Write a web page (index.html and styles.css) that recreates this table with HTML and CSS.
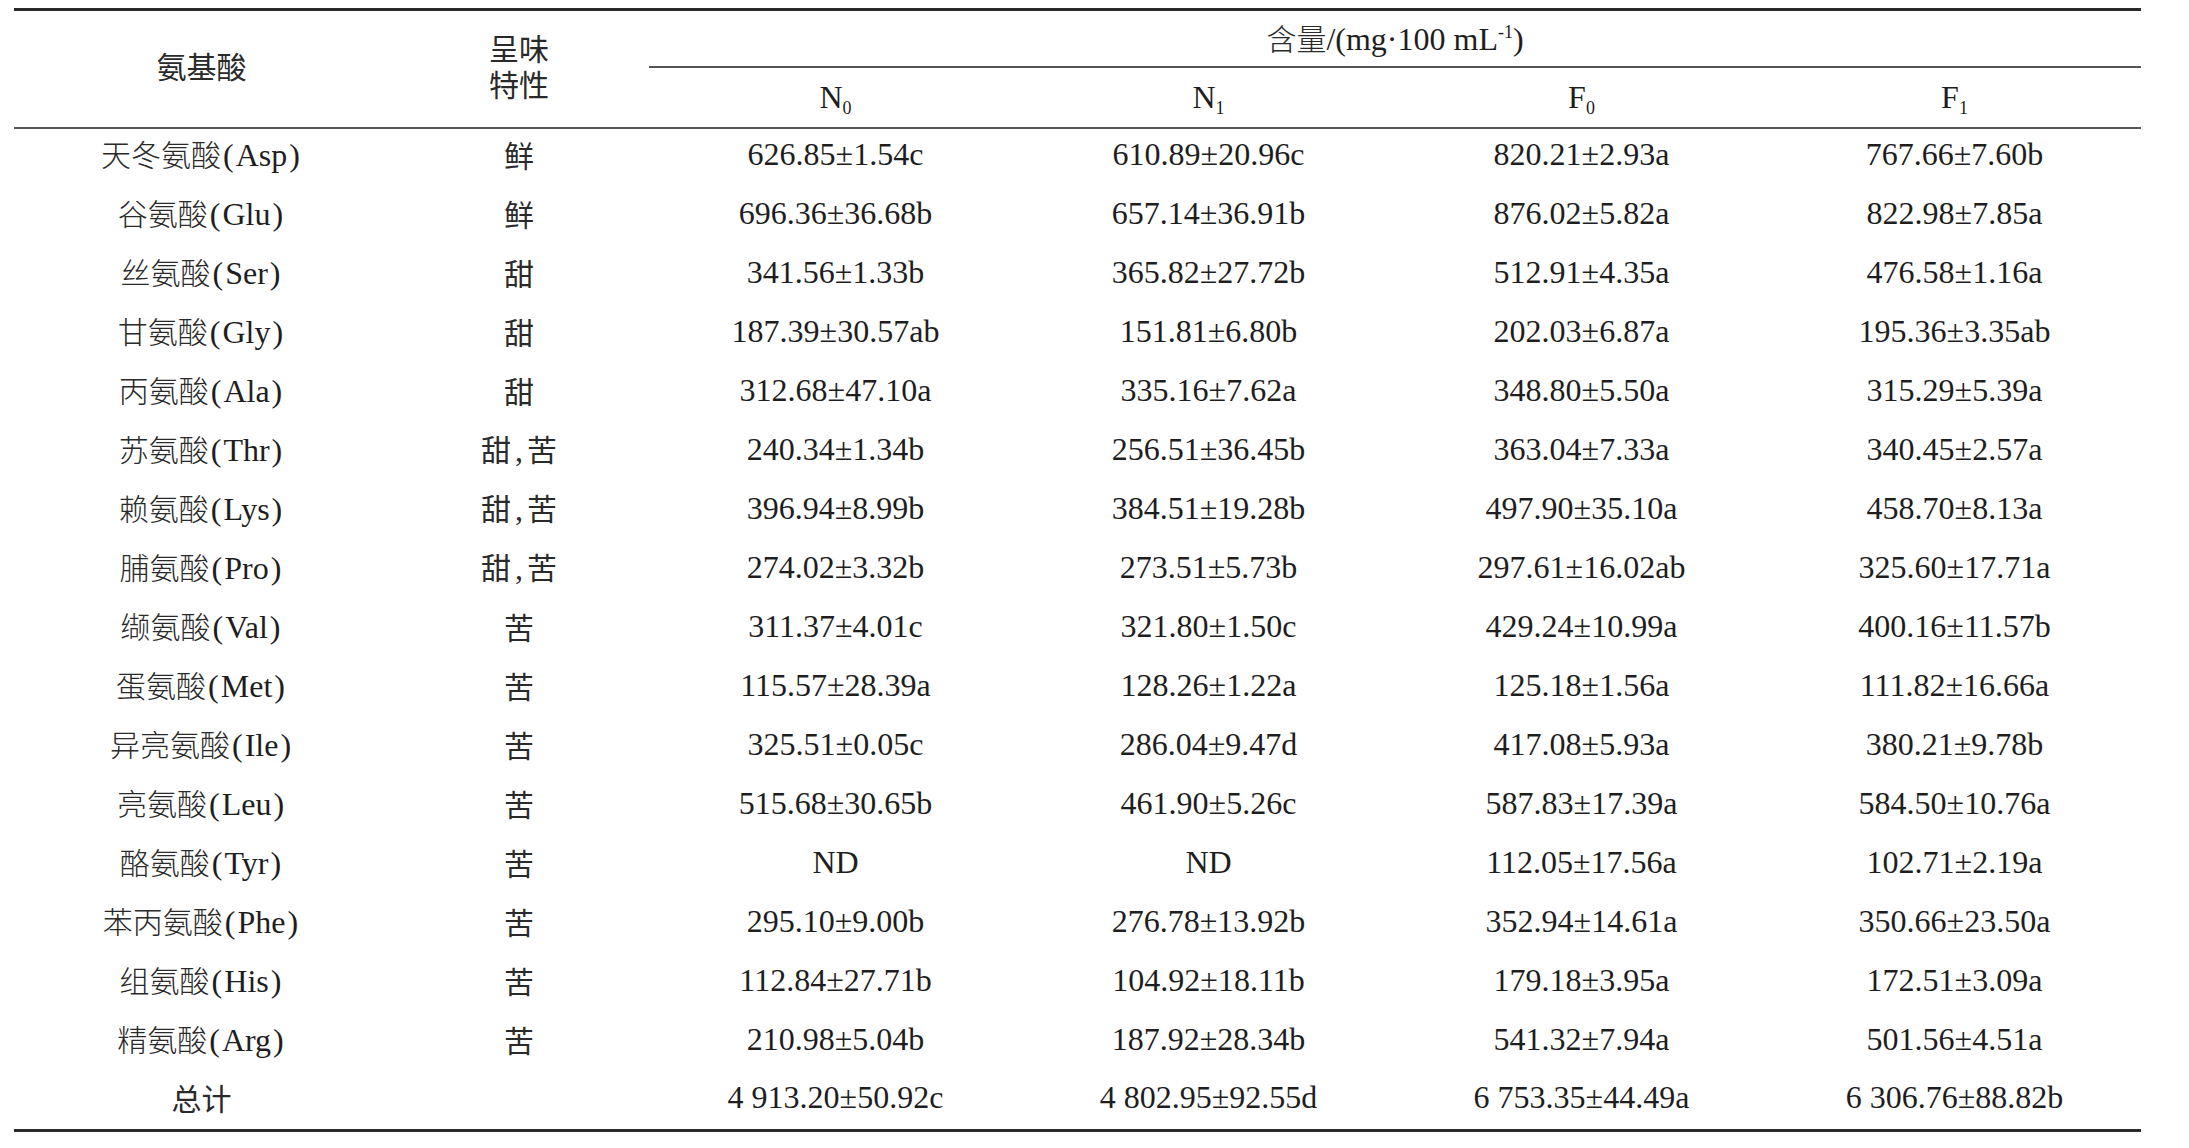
FILE: index.html
```html
<!DOCTYPE html>
<html lang="zh">
<head>
<meta charset="utf-8">
<title>氨基酸含量</title>
<link rel="stylesheet" href="styles.css">
</head>
<body>
<table class="aa-table">
  <colgroup>
    <col class="c-name"><col class="c-taste"><col class="c-val"><col class="c-val"><col class="c-val"><col class="c-val">
  </colgroup>
  <thead>
    <tr class="h1">
      <th rowspan="2" class="zh">氨基酸</th>
      <th rowspan="2" class="zh two"><span class="ln">呈味</span><span class="ln">特性</span></th>
      <th colspan="4" class="span-head"><span class="zh">含量</span>/(mg·100 mL<sup>-1</sup>)</th>
    </tr>
    <tr class="h2">
      <th>N<sub>0</sub></th>
      <th>N<sub>1</sub></th>
      <th>F<sub>0</sub></th>
      <th>F<sub>1</sub></th>
    </tr>
  </thead>
  <tbody>
    <tr><td><span class="zh">天冬氨酸</span><span class="p">(</span>Asp<span class="p">)</span></td><td class="zh">鲜</td><td>626.85±1.54c</td><td>610.89±20.96c</td><td>820.21±2.93a</td><td>767.66±7.60b</td></tr>
    <tr><td><span class="zh">谷氨酸</span><span class="p">(</span>Glu<span class="p">)</span></td><td class="zh">鲜</td><td>696.36±36.68b</td><td>657.14±36.91b</td><td>876.02±5.82a</td><td>822.98±7.85a</td></tr>
    <tr><td><span class="zh">丝氨酸</span><span class="p">(</span>Ser<span class="p">)</span></td><td class="zh">甜</td><td>341.56±1.33b</td><td>365.82±27.72b</td><td>512.91±4.35a</td><td>476.58±1.16a</td></tr>
    <tr><td><span class="zh">甘氨酸</span><span class="p">(</span>Gly<span class="p">)</span></td><td class="zh">甜</td><td>187.39±30.57ab</td><td>151.81±6.80b</td><td>202.03±6.87a</td><td>195.36±3.35ab</td></tr>
    <tr><td><span class="zh">丙氨酸</span><span class="p">(</span>Ala<span class="p">)</span></td><td class="zh">甜</td><td>312.68±47.10a</td><td>335.16±7.62a</td><td>348.80±5.50a</td><td>315.29±5.39a</td></tr>
    <tr><td><span class="zh">苏氨酸</span><span class="p">(</span>Thr<span class="p">)</span></td><td class="zh">甜<span class="cm">,</span>苦</td><td>240.34±1.34b</td><td>256.51±36.45b</td><td>363.04±7.33a</td><td>340.45±2.57a</td></tr>
    <tr><td><span class="zh">赖氨酸</span><span class="p">(</span>Lys<span class="p">)</span></td><td class="zh">甜<span class="cm">,</span>苦</td><td>396.94±8.99b</td><td>384.51±19.28b</td><td>497.90±35.10a</td><td>458.70±8.13a</td></tr>
    <tr><td><span class="zh">脯氨酸</span><span class="p">(</span>Pro<span class="p">)</span></td><td class="zh">甜<span class="cm">,</span>苦</td><td>274.02±3.32b</td><td>273.51±5.73b</td><td>297.61±16.02ab</td><td>325.60±17.71a</td></tr>
    <tr><td><span class="zh">缬氨酸</span><span class="p">(</span>Val<span class="p">)</span></td><td class="zh">苦</td><td>311.37±4.01c</td><td>321.80±1.50c</td><td>429.24±10.99a</td><td>400.16±11.57b</td></tr>
    <tr><td><span class="zh">蛋氨酸</span><span class="p">(</span>Met<span class="p">)</span></td><td class="zh">苦</td><td>115.57±28.39a</td><td>128.26±1.22a</td><td>125.18±1.56a</td><td>111.82±16.66a</td></tr>
    <tr><td><span class="zh">异亮氨酸</span><span class="p">(</span>Ile<span class="p">)</span></td><td class="zh">苦</td><td>325.51±0.05c</td><td>286.04±9.47d</td><td>417.08±5.93a</td><td>380.21±9.78b</td></tr>
    <tr><td><span class="zh">亮氨酸</span><span class="p">(</span>Leu<span class="p">)</span></td><td class="zh">苦</td><td>515.68±30.65b</td><td>461.90±5.26c</td><td>587.83±17.39a</td><td>584.50±10.76a</td></tr>
    <tr><td><span class="zh">酪氨酸</span><span class="p">(</span>Tyr<span class="p">)</span></td><td class="zh">苦</td><td>ND</td><td>ND</td><td>112.05±17.56a</td><td>102.71±2.19a</td></tr>
    <tr><td><span class="zh">苯丙氨酸</span><span class="p">(</span>Phe<span class="p">)</span></td><td class="zh">苦</td><td>295.10±9.00b</td><td>276.78±13.92b</td><td>352.94±14.61a</td><td>350.66±23.50a</td></tr>
    <tr><td><span class="zh">组氨酸</span><span class="p">(</span>His<span class="p">)</span></td><td class="zh">苦</td><td>112.84±27.71b</td><td>104.92±18.11b</td><td>179.18±3.95a</td><td>172.51±3.09a</td></tr>
    <tr><td><span class="zh">精氨酸</span><span class="p">(</span>Arg<span class="p">)</span></td><td class="zh">苦</td><td>210.98±5.04b</td><td>187.92±28.34b</td><td>541.32±7.94a</td><td>501.56±4.51a</td></tr>
    <tr class="total"><td class="zh">总计</td><td></td><td>4 913.20±50.92c</td><td>4 802.95±92.55d</td><td>6 753.35±44.49a</td><td>6 306.76±88.82b</td></tr>
  </tbody>
</table>
</body>
</html>
```

FILE: styles.css
```css
html, body {
  margin: 0;
  padding: 0;
  background: #ffffff;
}

body {
  padding: 8px 48px 0 14px;
  font-family: "Liberation Serif", "Noto Sans CJK SC", serif;
  font-size: 32px;
  color: #1e1e1e;
}

.aa-table {
  border-collapse: collapse;
  width: 2127px;
  table-layout: fixed;
  border-top: 3px solid #2a2a2a;
  border-bottom: 3px solid #2a2a2a;
}

.c-name { width: 375px; }
.c-taste { width: 260px; }
.c-val { width: 373px; }

.aa-table th,
.aa-table td {
  padding: 0;
  text-align: center;
  font-weight: normal;
  white-space: nowrap;
  line-height: 34px;
}

.aa-table thead tr.h1 {
  height: 57px;
}

.aa-table thead tr.h2 {
  height: 61px;
}

.aa-table th.span-head {
  border-bottom: 2px solid #555555;
}

.aa-table thead tr.h2 th,
.aa-table thead th[rowspan] {
  border-bottom: 2px solid #555555;
}

.aa-table thead th[rowspan] {
  padding-bottom: 8px;
}

.aa-table th.two {
  line-height: 36px;
}

.ln {
  display: block;
  height: 36px;
  line-height: 36px;
  overflow: visible;
}

.aa-table tbody tr {
  height: 59px;
}

.aa-table tbody td {
  padding-bottom: 7px;
}

.zh {
  font-family: "Noto Sans CJK SC", sans-serif;
  font-weight: 300;
  font-size: 30px;
  color: #2a2a2a;
}

.p {
  margin: 0 2px;
}

.cm {
  font-family: "Liberation Serif", serif;
  font-size: 32px;
  margin: 0 4px;
}

sub {
  font-size: 18px;
  vertical-align: -6px;
  line-height: 0;
}

sup {
  font-size: 18px;
  vertical-align: 12px;
  line-height: 0;
}
```
